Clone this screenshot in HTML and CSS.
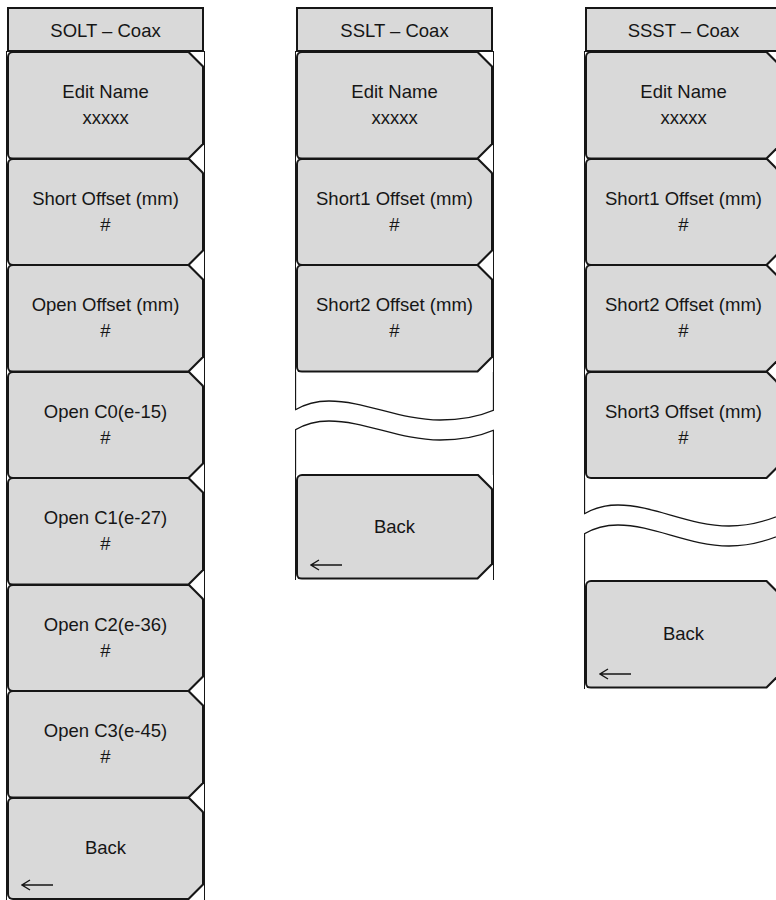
FILE: index.html
```html
<!DOCTYPE html>
<html>
<head>
    <title>Calibration Kit Menus</title>
    <link rel="stylesheet" href="styles.css">
</head>
<body>
    <div class="panels">

        <!-- SOLT menu -->
        <div class="menu col-1">
            <div class="menu-title">SOLT – Coax</div>
            <div class="key"><div class="key-edge"><div class="key-face"><span>Edit Name</span><span>xxxxx</span></div></div></div>
            <div class="key"><div class="key-edge"><div class="key-face"><span>Short Offset (mm)</span><span>#</span></div></div></div>
            <div class="key"><div class="key-edge"><div class="key-face"><span>Open Offset (mm)</span><span>#</span></div></div></div>
            <div class="key"><div class="key-edge"><div class="key-face"><span>Open C0(e-15)</span><span>#</span></div></div></div>
            <div class="key"><div class="key-edge"><div class="key-face"><span>Open C1(e-27)</span><span>#</span></div></div></div>
            <div class="key"><div class="key-edge"><div class="key-face"><span>Open C2(e-36)</span><span>#</span></div></div></div>
            <div class="key"><div class="key-edge"><div class="key-face"><span>Open C3(e-45)</span><span>#</span></div></div></div>
            <div class="key key-back">
                <div class="key-edge"><div class="key-face">
                    <span>Back</span>
                    <svg class="back-arrow" viewBox="0 0 32 12"><path d="M1 6H32M9 1L1 6L9 11"/></svg>
                </div></div>
            </div>
        </div>

        <!-- SSLT menu -->
        <div class="menu col-2">
            <div class="menu-title">SSLT – Coax</div>
            <div class="key"><div class="key-edge"><div class="key-face"><span>Edit Name</span><span>xxxxx</span></div></div></div>
            <div class="key"><div class="key-edge"><div class="key-face"><span>Short1 Offset (mm)</span><span>#</span></div></div></div>
            <div class="key"><div class="key-edge"><div class="key-face"><span>Short2 Offset (mm)</span><span>#</span></div></div></div>
            <svg class="menu-break" viewBox="0 0 199 103" preserveAspectRatio="none">
                <path d="M0.5 0V38M0.5 58V103M198.5 0V38M198.5 58V103"/>
                <path d="M0 38C10 32 20 29 34 29C70 29 105 48 145 48C165 48 185 44 199 38"/>
                <path d="M0 58C10 52 20 49 34 49C70 49 105 68 145 68C165 68 185 64 199 58"/>
            </svg>
            <div class="key key-back">
                <div class="key-edge"><div class="key-face">
                    <span>Back</span>
                    <svg class="back-arrow" viewBox="0 0 32 12"><path d="M1 6H32M9 1L1 6L9 11"/></svg>
                </div></div>
            </div>
        </div>

        <!-- SSST menu -->
        <div class="menu col-3">
            <div class="menu-title">SSST – Coax</div>
            <div class="key"><div class="key-edge"><div class="key-face"><span>Edit Name</span><span>xxxxx</span></div></div></div>
            <div class="key"><div class="key-edge"><div class="key-face"><span>Short1 Offset (mm)</span><span>#</span></div></div></div>
            <div class="key"><div class="key-edge"><div class="key-face"><span>Short2 Offset (mm)</span><span>#</span></div></div></div>
            <div class="key"><div class="key-edge"><div class="key-face"><span>Short3 Offset (mm)</span><span>#</span></div></div></div>
            <svg class="menu-break" viewBox="0 0 199 103" preserveAspectRatio="none">
                <path d="M0.5 0V36M0.5 56V103M198.5 0V36M198.5 56V103"/>
                <path d="M0 36C10 30 20 27 34 27C70 27 105 48 145 48C165 48 185 42 199 36"/>
                <path d="M0 56C10 50 20 47 34 47C70 47 105 68 145 68C165 68 185 62 199 56"/>
            </svg>
            <div class="key key-back">
                <div class="key-edge"><div class="key-face">
                    <span>Back</span>
                    <svg class="back-arrow" viewBox="0 0 32 12"><path d="M1 6H32M9 1L1 6L9 11"/></svg>
                </div></div>
            </div>
        </div>

    </div>
</body>
</html>
```

FILE: styles.css
```css
/* Page */
html, body {
    overflow: hidden;
}

body {
    margin: 0;
    background-color: #ffffff;
    font-family: "Liberation Sans", Arial, sans-serif;
    font-size: 18.5px;
    color: #161616;
}

/* Three menus side by side */
.panels {
    display: flex;
    gap: 90px;
    padding: 7px 0 0 6px;
}

.menu {
    flex: 0 0 199px;
    display: flex;
    flex-direction: column;
}

/* Menu title box */
.menu-title {
    height: 45px;
    box-sizing: border-box;
    margin: 0 1px;
    padding-top: 3px;
    border: 2px solid #161616;
    background-color: #d9d9d9;
    display: flex;
    align-items: center;
    justify-content: center;
}

/* Soft keys: frame line + dark edge + grey face */
.key {
    height: 108.5px;
    box-sizing: border-box;
    margin-top: -2px;
    border-left: 1px solid #161616;
    border-right: 1px solid #161616;
}

.menu-title + .key {
    margin-top: -1px;
}

.key-edge {
    height: 100%;
    box-sizing: border-box;
    padding: 2px;
    background-color: #161616;
    border-radius: 6px 0 0 6px;
    clip-path: polygon(0 0, calc(100% - 15px) 0, 100% 15px, 100% calc(100% - 15px), calc(100% - 15px) 100%, 0 100%);
}

.key-face {
    position: relative;
    height: 100%;
    background-color: #d9d9d9;
    border-radius: 4px 0 0 4px;
    clip-path: polygon(0 0, calc(100% - 14px) 0, 100% 14px, 100% calc(100% - 14px), calc(100% - 14px) 100%, 0 100%);
    display: flex;
    flex-direction: column;
    align-items: center;
    justify-content: center;
    line-height: 26px;
    text-align: center;
}

.col-1 .key-back {
    height: 103.5px;
}

.col-2 .key-back {
    height: 106px;
}

/* Arrow in the Back key */
.back-arrow {
    position: absolute;
    left: 12px;
    bottom: 7px;
    width: 32px;
    height: 12px;
    fill: none;
    stroke: #161616;
    stroke-width: 1.4;
}

/* Gap with wavy break marks */
.menu-break {
    display: block;
    width: 199px;
    height: 103px;
    margin-top: -1px;
    margin-bottom: 1px;
    fill: none;
    stroke: #161616;
    stroke-width: 1.3;
}
```
